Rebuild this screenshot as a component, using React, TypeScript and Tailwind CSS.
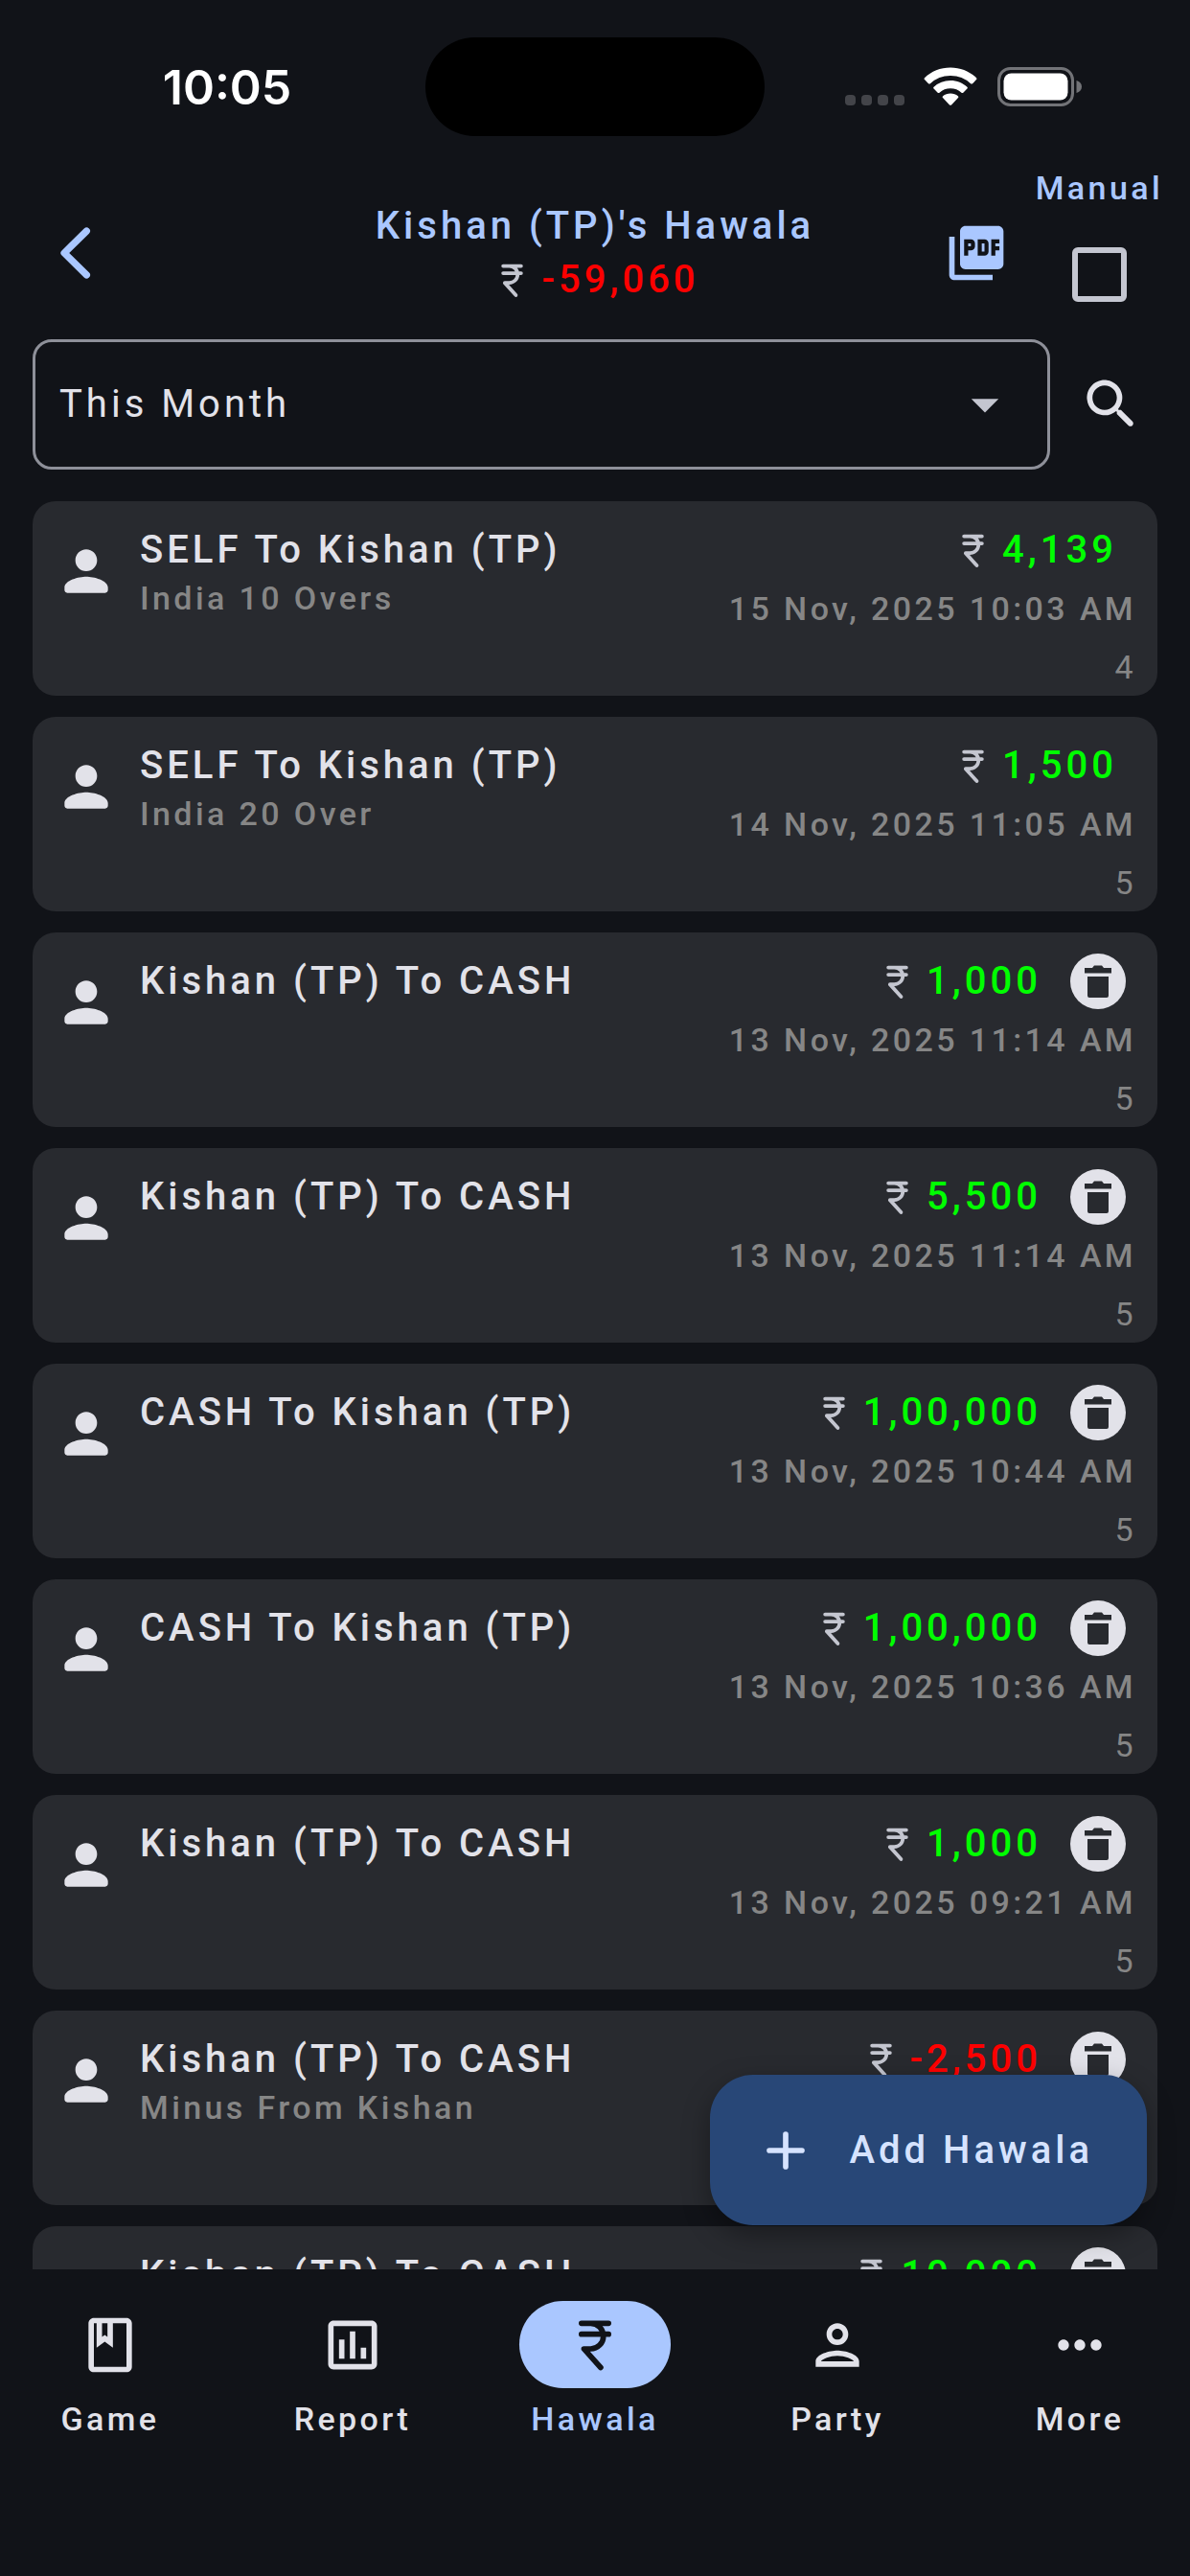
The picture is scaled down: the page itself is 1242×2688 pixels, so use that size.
import React, { useState } from 'react';
import { MdMoreHoriz, MdOutlineAssessment, MdPictureAsPdf } from 'react-icons/md';
import clsx from 'clsx';

interface Entry {
  id: number;
  title: string;
  note?: string;
  amount: string;
  date: string;
  count: number;
  deletable?: boolean;
}

const entries: Entry[] = [
  { id: 1, title: 'SELF To Kishan (TP)', note: 'India 10 Overs', amount: '4,139', date: '15 Nov, 2025 10:03 AM', count: 4 },
  { id: 2, title: 'SELF To Kishan (TP)', note: 'India 20 Over', amount: '1,500', date: '14 Nov, 2025 11:05 AM', count: 5 },
  { id: 3, title: 'Kishan (TP) To CASH', amount: '1,000', date: '13 Nov, 2025 11:14 AM', count: 5, deletable: true },
  { id: 4, title: 'Kishan (TP) To CASH', amount: '5,500', date: '13 Nov, 2025 11:14 AM', count: 5, deletable: true },
  { id: 5, title: 'CASH To Kishan (TP)', amount: '1,00,000', date: '13 Nov, 2025 10:44 AM', count: 5, deletable: true },
  { id: 6, title: 'CASH To Kishan (TP)', amount: '1,00,000', date: '13 Nov, 2025 10:36 AM', count: 5, deletable: true },
  { id: 7, title: 'Kishan (TP) To CASH', amount: '1,000', date: '13 Nov, 2025 09:21 AM', count: 5, deletable: true },
  { id: 8, title: 'Kishan (TP) To CASH', note: 'Minus From Kishan', amount: '-2,500', date: '13 Nov, 2025 09:20 AM', count: 5, deletable: true },
  { id: 9, title: 'Kishan (TP) To CASH', amount: '10,000', date: '13 Nov, 2025 09:18 AM', count: 5, deletable: true },
];

interface IconProps {
  className?: string;
}

const RupeeIcon: React.FC<IconProps> = ({ className }) => (
  <svg viewBox="0 0 24 24" className={className} fill="none" stroke="currentColor" strokeWidth="2" strokeLinecap="round" strokeLinejoin="round" aria-hidden="true">
    <path d="M7 4h10M7 8h10M9.500 4h.9a4.700 4.700 0 0 1 0 9.400H7.900l6.200 6.900" />
  </svg>
);

const PersonIcon: React.FC<IconProps> = ({ className }) => (
  <svg viewBox="0 0 24 24" className={className} fill="currentColor" aria-hidden="true">
    <path d="M12 12c2.21 0 4-1.79 4-4s-1.79-4-4-4-4 1.79-4 4 1.79 4 4 4zm0 2c-2.67 0-8 1.34-8 4v1c0 .55.45 1 1 1h14c.55 0 1-.45 1-1v-1c0-2.66-5.33-4-8-4z" />
  </svg>
);

const PersonOutlineIcon: React.FC<IconProps> = ({ className }) => (
  <svg viewBox="0 0 24 24" className={className} fill="currentColor" aria-hidden="true">
    <path d="M12 6c1.1 0 2 .9 2 2s-.9 2-2 2-2-.9-2-2 .9-2 2-2m0 10c2.7 0 5.8 1.29 6 2H6c.23-.72 3.31-2 6-2m0-12C9.79 4 8 5.79 8 8s1.79 4 4 4 4-1.79 4-4-1.79-4-4-4zm0 10c-2.67 0-8 1.34-8 4v2h16v-2c0-2.66-5.33-4-8-4z" />
  </svg>
);

const BookIcon: React.FC<IconProps> = ({ className }) => (
  <svg viewBox="0 0 24 24" className={className} fill="currentColor" aria-hidden="true">
    <path d="M18 2H6c-1.1 0-2 .9-2 2v16c0 1.1.9 2 2 2h12c1.1 0 2-.9 2-2V4c0-1.1-.9-2-2-2zM9 4h2v5l-1-.75L9 9V4zm9 16H6V4h1v9l3-2.25L13 13V4h5v16z" />
  </svg>
);

const SearchIcon: React.FC<IconProps> = ({ className }) => (
  <svg viewBox="0 0 24 24" className={className} fill="currentColor" aria-hidden="true">
    <path d="M15.5 14h-.79l-.28-.27c1.2-1.4 1.82-3.31 1.48-5.34-.47-2.78-2.79-5-5.59-5.34-4.23-.52-7.79 3.04-7.27 7.27.34 2.8 2.56 5.12 5.34 5.59 2.03.34 3.94-.28 5.34-1.48l.27.28v.79l4.25 4.25c.41.41 1.08.41 1.49 0 .41-.41.41-1.08 0-1.49L15.5 14zm-6 0C7.01 14 5 11.99 5 9.5S7.01 5 9.5 5 14 7.01 14 9.5 11.99 14 9.5 14z" />
  </svg>
);

const StatusBar: React.FC = () => (
  <div className="grid h-[174px] grid-cols-[1fr_auto_1fr] items-start pt-[39px]">
    <div className="flex h-[103px] items-center justify-center pl-[30px] font-['Inter',sans-serif] text-[50px] leading-[60px] font-semibold tracking-normal text-white">
      10:05
    </div>
    <div className="h-[103px] w-[354px] rounded-full bg-black" />
    <div className="flex h-[103px] items-center justify-center pr-7">
      <svg viewBox="0 0 248 41" className="h-[41px] w-[248px]" fill="none" aria-hidden="true">
        <g fill="#434449">
          <rect x="0" y="29" width="11" height="11" rx="4" />
          <rect x="17" y="29" width="11" height="11" rx="4" />
          <rect x="34" y="29" width="11" height="11" rx="4" />
          <rect x="51" y="29" width="11" height="11" rx="4" />
        </g>
        <g fill="#fff">
          <path d="M110 0.5c10.500 0 20 4 27 10.700.6.600.6 1.300 0 1.900l-4 4.100c-.5.500-1.300.5-1.900 0A30.500 30.500 0 0 0 110 9a30.500 30.500 0 0 0-21.100 8.200c-.6.5-1.400.5-1.900 0l-4-4.100c-.6-.6-.6-1.300 0-1.900C90 4.500 99.500.5 110 .5z" />
          <path d="M110 14c6.700 0 12.800 2.500 17.400 6.700.6.600.6 1.300 0 1.900l-4.100 4.100c-.5.500-1.200.5-1.800.1a17 17 0 0 0-23 0c-.6.400-1.300.4-1.800-.1l-4.100-4.100c-.6-.6-.6-1.300 0-1.900A25.800 25.800 0 0 1 110 14z" />
          <path d="M110 27.500c3 0 5.700 1 7.900 2.800.6.500.6 1.300.1 1.800l-7 7.300c-.6.600-1.400.6-2 0l-7-7.300c-.5-.5-.5-1.300.1-1.800 2.200-1.800 4.900-2.800 7.900-2.800z" />
        </g>
        <rect x="160.500" y="1.500" width="77" height="38" rx="12" stroke="#727377" strokeWidth="3" />
        <rect x="165.500" y="6.500" width="67" height="28" rx="8" fill="#fff" />
        <path d="M241.500 14c3.500 1 5.500 3.500 5.500 6.500s-2 5.500-5.500 6.500z" fill="#727377" />
      </svg>
    </div>
  </div>
);

const Header: React.FC = () => {
  const [manual, setManual] = useState(false);

  return (
    <header className="grid h-[180px] grid-cols-[1fr_auto_1fr] items-center px-7">
      <button type="button" aria-label="Back" className="ml-[17px] size-[68px] text-[#aac7ff]">
        <svg viewBox="0 0 24 24" fill="none" stroke="currentColor" strokeWidth="2.600" strokeLinecap="round" strokeLinejoin="round" aria-hidden="true">
          <path d="M16 3.900 7.800 12l8.200 8.100" />
        </svg>
      </button>
      <div className="text-center leading-[56px]">
        <h1 className="font-medium text-[#aac7ff]">Kishan (TP)'s Hawala</h1>
        <p className="flex items-center justify-center gap-2 font-medium text-[#ff0000]">
          <RupeeIcon className="size-[45px] text-[#c4c6d0]" />
          -59,060
        </p>
      </div>
      <div className="flex items-center justify-end gap-7 self-stretch">
        <button type="button" aria-label="Export as PDF" className="text-[#aac7ff]">
          <MdPictureAsPdf className="size-[68px]" />
        </button>
        <label className="flex flex-col items-center gap-10 self-start text-[34px] leading-[44px] font-medium tracking-widest text-[#aac7ff]">
          Manual
          <input
            type="checkbox"
            checked={manual}
            onChange={(e) => setManual(e.target.checked)}
            className="size-[57px] appearance-none rounded-md border-6 border-[#c4c6d0] checked:bg-[#aac7ff]"
          />
        </label>
      </div>
    </header>
  );
};

const EntryCard: React.FC<{ entry: Entry }> = ({ entry }) => (
  <li className="flex shrink-0 items-start gap-[22px] rounded-3xl bg-[#282a2f] px-[22px] pt-[21px]">
    <PersonIcon className="mt-[18px] size-[68px] shrink-0" />
    <div className="flex-1 font-medium">
      <h2 className="leading-[60px]">{entry.title}</h2>
      {entry.note && <p className="text-[34px] leading-[40px] tracking-widest text-[#868686]">{entry.note}</p>}
    </div>
    <div className="flex flex-col items-end">
      <div className={clsx('flex h-[60px] items-center', entry.deletable ? 'pr-[11px]' : 'pr-5')}>
        <RupeeIcon className="mr-2 size-[45px] text-[#c4c6d0]" />
        <span className={clsx('font-medium', entry.amount.startsWith('-') ? 'text-[#ff0000]' : 'text-[#00ff00]')}>
          {entry.amount}
        </span>
        {entry.deletable && (
          <button type="button" aria-label={`Delete ${entry.title}`} className="ml-[30px]">
            <svg viewBox="0 0 58 58" className="size-[58px]" aria-hidden="true">
              <circle cx="29" cy="29" r="29" fill="#e2e2e9" />
              <path d="M15 15h8l2-2.500h8l2 2.500h8v5.500H15zM18 24h22v20a2 2 0 0 1-2 2H20a2 2 0 0 1-2-2z" fill="#282a2f" />
            </svg>
          </button>
        )}
      </div>
      <p className="text-[34px] leading-[62px] font-medium tracking-widest text-[#868686]">{entry.date}</p>
      <p className="text-[34px] leading-[60px] tracking-widest text-[#868686]">{entry.count}</p>
    </div>
  </li>
);

const tabs = [
  { label: 'Game', icon: BookIcon },
  { label: 'Report', icon: MdOutlineAssessment },
  { label: 'Hawala', icon: RupeeIcon },
  { label: 'Party', icon: PersonOutlineIcon },
  { label: 'More', icon: MdMoreHoriz },
];

const BottomNav: React.FC = () => (
  <nav className="flex justify-between px-9 pt-[33px] pb-[132px]">
    {tabs.map(({ label, icon: Icon }) => {
      const active = label === 'Hawala';
      return (
        <a
          key={label}
          href={`#${label.toLowerCase()}`}
          aria-current={active ? 'page' : undefined}
          className={clsx('flex w-[158px] flex-col items-center text-[34px] leading-[64px] font-medium tracking-widest', active && 'text-[#aac7ff]')}
        >
          <span className={clsx('flex h-[91px] w-full items-center justify-center rounded-full', active && 'bg-[#aac7ff] text-[#111318]')}>
            <Icon className="size-[68px]" />
          </span>
          {label}
        </a>
      );
    })}
  </nav>
);

export default function App() {
  const [range, setRange] = useState('This Month');

  return (
    <div className="flex h-screen flex-col overflow-hidden bg-[#111318] font-['Roboto',sans-serif] text-[40px] tracking-widest text-[#e2e2e9]">
      <StatusBar />
      <Header />

      <div className="flex items-center gap-[30px] pr-12 pl-[34px]">
        <div className="relative flex-1">
          <select
            aria-label="Period"
            value={range}
            onChange={(e) => setRange(e.target.value)}
            className="h-[136px] w-full appearance-none rounded-[20px] border-3 border-[#8e9099] bg-transparent px-[25px] tracking-widest"
          >
            <option>This Month</option>
            <option>Last Month</option>
            <option>This Year</option>
          </select>
          <svg viewBox="0 0 24 24" className="pointer-events-none absolute inset-y-0 right-[34px] my-auto size-[68px] text-[#c4c6d0]" fill="currentColor" aria-hidden="true">
            <path d="M7 10l5 5 5-5z" />
          </svg>
        </div>
        <button type="button" aria-label="Search">
          <SearchIcon className="size-[68px]" />
        </button>
      </div>

      <main className="relative mt-[33px] min-h-0 flex-1">
        <ul className="flex h-full flex-col gap-[22px] overflow-hidden px-[34px]">
          {entries.map((entry) => (
            <EntryCard key={entry.id} entry={entry} />
          ))}
        </ul>
        <button
          type="button"
          className="absolute right-[45px] bottom-[46px] flex h-[157px] items-center gap-[33px] rounded-[45px] bg-[#284777] pr-14 pl-[45px] font-medium text-[#d6e3ff] shadow-[0_10px_28px_rgba(0,0,0,0.35)]"
        >
          <svg viewBox="0 0 24 24" className="size-[68px]" fill="none" stroke="currentColor" strokeWidth="2" strokeLinecap="round" aria-hidden="true">
            <path d="M12 6v12M6 12h12" />
          </svg>
          Add Hawala
        </button>
      </main>

      <BottomNav />
    </div>
  );
}
